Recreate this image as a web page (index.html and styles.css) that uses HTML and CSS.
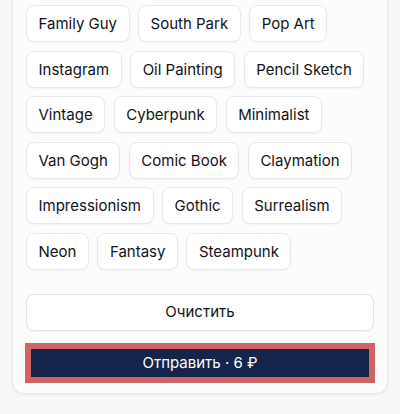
FILE: index.html
```html
<!DOCTYPE html>
<html lang="ru">
<head>
<meta charset="utf-8">
<link rel="stylesheet" href="styles.css">
</head>
<body>
<div class="card">
  <div class="chips">
    <button class="chip">Family Guy</button>
    <button class="chip">South Park</button>
    <button class="chip">Pop Art</button>
    <button class="chip">Instagram</button>
    <button class="chip">Oil Painting</button>
    <button class="chip">Pencil Sketch</button>
    <button class="chip">Vintage</button>
    <button class="chip">Cyberpunk</button>
    <button class="chip">Minimalist</button>
    <button class="chip">Van Gogh</button>
    <button class="chip">Comic Book</button>
    <button class="chip">Claymation</button>
    <button class="chip">Impressionism</button>
    <button class="chip">Gothic</button>
    <button class="chip">Surrealism</button>
    <button class="chip">Neon</button>
    <button class="chip">Fantasy</button>
    <button class="chip">Steampunk</button>
  </div>
  <div class="actions">
    <button class="btn btn-clear">Очистить</button>
    <button class="btn btn-send">Отправить · 6 ₽</button>
  </div>
</div>
</body>
</html>
```
FILE: styles.css
```css
* { box-sizing: border-box; }
html, body { margin: 0; padding: 0; }
body {
  background: #f7f8fa;
  font-family: Inter, "Noto Sans", sans-serif;
  color: #111317;
  width: 400px;
  height: 414px;
  overflow: hidden;
}
.card {
  margin: -20px 12px 0 12px;
  background: #fcfcfd;
  border: 1px solid #e6e8ec;
  border-radius: 12px;
  padding: 24px 13px 11px 13px;
  box-shadow: 0 1px 3px rgba(16, 24, 40, 0.06);
}
.chips {
  display: flex;
  flex-wrap: wrap;
  column-gap: 8.5px;
  row-gap: 8.5px;
}
.chip {
  font-family: inherit;
  font-size: 15px;
  line-height: 20px;
  color: #111317;
  background: #ffffff;
  border: 1px solid #e7e9ed;
  border-radius: 8px;
  padding: 8px 11.5px;
  height: 37px;
  box-shadow: 0 1px 2px rgba(16, 24, 40, 0.04);
}
.actions {
  display: flex;
  flex-direction: column;
  gap: 13px;
  margin-top: 24px;
}
.btn {
  font-family: inherit;
  font-size: 15px;
  line-height: 20px;
  width: 100%;
  border-radius: 8px;
}
.btn-clear {
  height: 37px;
  background: #ffffff;
  border: 1px solid #e2e4e8;
  color: #111317;
  box-shadow: 0 1px 2px rgba(16, 24, 40, 0.05);
}
.btn-send {
  height: 38px;
  background: #15244a;
  color: #ffffff;
  border: 5px solid #d06464;
  border-radius: 0;
  outline: 1px solid #d06464;
}
```
